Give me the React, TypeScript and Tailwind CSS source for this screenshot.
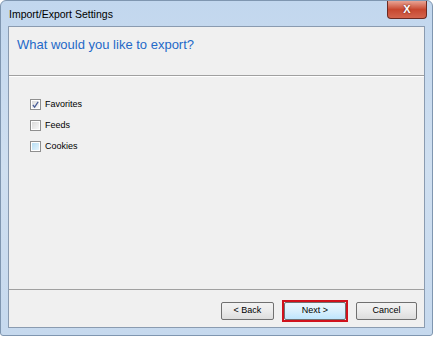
import React from "react";

const font = { fontFamily: '"Liberation Sans", Arial, sans-serif' };

function CheckBox({ label, checked, hover }: { label: string; checked?: boolean; hover?: boolean }) {
  return (
    <div className="flex items-center gap-[4px] h-[11px]">
      <div className="w-[11px] h-[11px] border border-[#8f8f8f] bg-white p-[1px]">
        <div
          className={
            hover
              ? "w-full h-full bg-gradient-to-br from-[#b6def5] to-[#e6f5fd] flex items-center justify-center"
              : "w-full h-full bg-gradient-to-br from-[#dcdcdc] to-[#f8f8f8] flex items-center justify-center"
          }
        >
          {checked && (
            <svg width="8" height="8" viewBox="0 0 8 8">
              <path d="M1 4 L3 6.5 L7 0.5" fill="none" stroke="#4a5f97" strokeWidth="1.4" />
            </svg>
          )}
        </div>
      </div>
      <span className="text-[9px] text-black leading-none">{label}</span>
    </div>
  );
}

function Button({ label, className }: { label: string; className: string }) {
  return (
    <div
      className={
        "h-[18px] border border-[#707070] rounded-[2px] flex items-center justify-center text-[9px] text-black " +
        className
      }
    >
      {label}
    </div>
  );
}

export default function App() {
  return (
    <div className="w-[434px] h-[338px] bg-white" style={font}>
      <div className="w-[433px] h-[336px] rounded-t-[6px] rounded-b-[3px] border border-[#7f96b0] bg-gradient-to-b from-[#c2d7ee] via-[#cfdff0] to-[#c6d9ee] flex flex-col px-[7px] pb-[7px]">
        {/* Title bar */}
        <div className="h-[25px] flex items-start justify-between">
          <span className="mt-[8px] pl-[1px] text-[10.5px] text-black leading-none">Import/Export Settings</span>
          <div className="w-[40px] h-[18px] mr-[-2px] rounded-b-[4px] border border-[#6b2a22] border-t-0 bg-gradient-to-b from-[#e8a394] via-[#c7472f] to-[#d4644d] flex items-center justify-center">
            <span className="text-white text-[11px] font-bold leading-none" style={{ textShadow: "0 0 2px #5a1a10" }}>
              X
            </span>
          </div>
        </div>

        {/* Client area */}
        <div className="flex-1 border border-[#8a9bb0] bg-[#f0f0f0] flex flex-col">
          {/* Header */}
          <div className="h-[49px] border-b border-[#a0a0a0] pl-[8px] pt-[5px]">
            <span className="text-[13px] text-[#2469c8] leading-none">What would you like to export?</span>
          </div>
          <div className="h-px bg-white" />

          {/* Options */}
          <div className="flex-1 flex flex-col gap-[10px] pl-[21px] pt-[22px]">
            <CheckBox label="Favorites" checked />
            <CheckBox label="Feeds" />
            <CheckBox label="Cookies" hover />
          </div>

          {/* Footer */}
          <div className="h-px bg-[#a0a0a0]" />
          <div className="h-[37px] bg-[#f0f0f0] flex items-start pt-[12px] pl-[212px]">
            <Button label="< Back" className="w-[53px] bg-gradient-to-b from-[#f2f2f2] via-[#ebebeb] to-[#dddddd]" />
            <div className="ml-[8px] mt-[-2px] border-2 border-[#d0121c] p-0">
              <Button
                label="Next >"
                className="w-[62px] border-[#3c7fb1] bg-gradient-to-b from-[#eaf6fd] via-[#d9f0fc] to-[#bee6fd]"
              />
            </div>
            <Button label="Cancel" className="ml-[8px] w-[61px] bg-gradient-to-b from-[#f2f2f2] via-[#ebebeb] to-[#dddddd]" />
          </div>
        </div>
      </div>
    </div>
  );
}
